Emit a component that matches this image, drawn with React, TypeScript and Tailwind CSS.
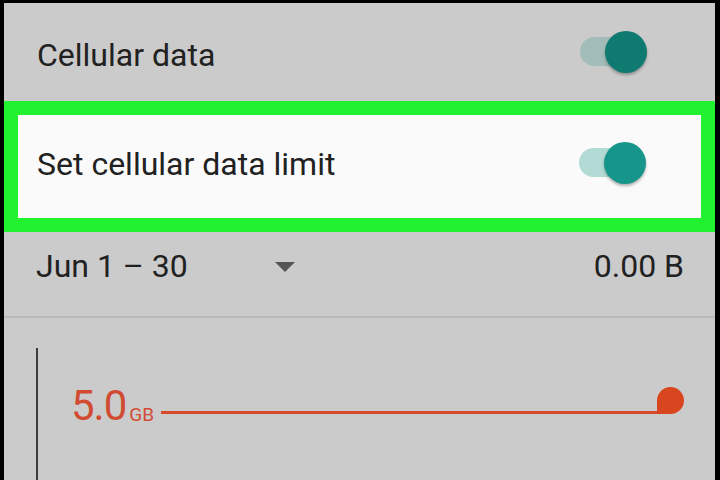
import React from 'react';

const font = { fontFamily: 'Roboto, "Noto Sans", sans-serif' };

interface ToggleProps {
  track: string;
  thumb: string;
}

// Android style switch, "on" position
const Toggle: React.FC<ToggleProps> = ({ track, thumb }) => (
  <div className="relative w-[67px] h-[42px] shrink-0">
    <div className={`absolute left-0 top-[6px] w-[52px] h-[29px] rounded-full ${track}`}></div>
    <div
      className={`absolute right-0 top-0 w-[42px] h-[42px] rounded-full shadow-[0_2px_3px_rgba(0,0,0,0.3)] ${thumb}`}
    ></div>
  </div>
);

export default function App() {
  return (
    <div className="w-[720px] h-[480px] bg-black pt-[3px] pl-[4px] pr-[5px] overflow-hidden" style={font}>
      <div className="h-full bg-[#cbcbcb] flex flex-col text-[#212121]">
        {/* Cellular data */}
        <div className="h-[98px] shrink-0 flex items-center justify-between pl-[33px] pr-[68px]">
          <span className="text-[32px] leading-none mt-[5px]">Cellular data</span>
          <Toggle track="bg-[#a2bdb9]" thumb="bg-[#0f7b70]" />
        </div>

        {/* Highlighted row */}
        <div className="h-[131px] shrink-0 border-[14px] border-[#21f22f] bg-[#fafafa] flex items-center justify-between pl-[19px] pr-[55px] pb-[8px]">
          <span className="text-[32px] leading-none mt-[3px]">Set cellular data limit</span>
          <Toggle track="bg-[#b3dbd6]" thumb="bg-[#16968a]" />
        </div>

        {/* Cycle */}
        <div className="h-[84px] shrink-0 flex items-center pl-[32px] pr-[31px] pb-[18px]">
          <span className="text-[32px] leading-none w-[239px] mt-[2px]">Jun 1 – 30</span>
          <span className="mt-[4px] w-0 h-0 border-l-[10px] border-r-[10px] border-t-[10px] border-l-transparent border-r-transparent border-t-[#555555]"></span>
          <span className="ml-auto text-[32px] leading-none mt-[2px]">0.00 B</span>
        </div>
        <div className="h-[2px] shrink-0 bg-[#b9b9b9]"></div>

        {/* Chart */}
        <div className="flex-1 pt-[30px] pl-[32px] pr-[31px]">
          <div className="h-full border-l-2 border-[#3d3d3d] pl-[33px] pt-[37px]">
            <div className="flex items-end">
              <span className="text-[42px] leading-none text-[#d14b33] tracking-[-1px]">5.0</span>
              <span className="text-[19px] leading-none text-[#d14b33] ml-[3px] mb-[3px]">GB</span>
              <div className="flex-1 flex items-end ml-[7px] mb-[13px]">
                <div className="flex-1 h-[3px] bg-[#d84a2b]"></div>
                <div className="w-[27px] h-[27px] bg-[#d8461f] rounded-[50%_50%_50%_0] -ml-[1px]"></div>
              </div>
            </div>
          </div>
        </div>
      </div>
    </div>
  );
}
